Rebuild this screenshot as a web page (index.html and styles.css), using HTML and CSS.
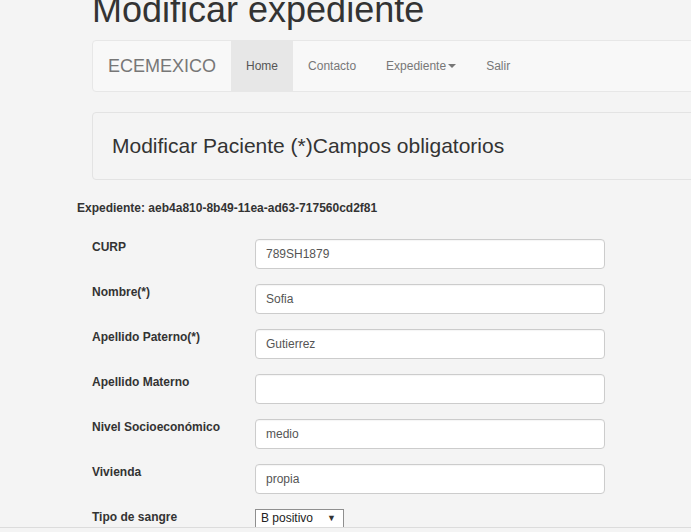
FILE: index.html
```html
<!DOCTYPE html>
<html lang="es">
<head>
    <meta charset="UTF-8">
    <meta name="viewport" content="width=device-width, initial-scale=1.0">
    <title>Modificar expediente</title>
    <link rel="stylesheet" href="styles.css">
</head>
<body>
    <div class="container">
        <h1>Modificar expediente</h1>
        <nav class="navbar">
            <a href="#" class="navbar-brand">ECEMEXICO</a>
            <ul class="nav">
                <li class="active"><a href="#">Home</a></li>
                <li><a href="#">Contacto</a></li>
                <li><a href="#">Expediente<span class="caret"></span></a></li>
                <li><a href="#">Salir</a></li>
            </ul>
        </nav>
        <div class="well">Modificar Paciente (*)Campos obligatorios</div>
    </div>

    <form class="record">
        <p class="record-id">Expediente: aeb4a810-8b49-11ea-ad63-717560cd2f81</p>
        <div class="form-row">
            <label for="curp">CURP</label>
            <input type="text" id="curp" value="789SH1879">
        </div>
        <div class="form-row">
            <label for="nombre">Nombre(*)</label>
            <input type="text" id="nombre" value="Sofia">
        </div>
        <div class="form-row">
            <label for="paterno">Apellido Paterno(*)</label>
            <input type="text" id="paterno" value="Gutierrez">
        </div>
        <div class="form-row">
            <label for="materno">Apellido Materno</label>
            <input type="text" id="materno" value="">
        </div>
        <div class="form-row">
            <label for="nivel">Nivel Socioeconómico</label>
            <input type="text" id="nivel" value="medio">
        </div>
        <div class="form-row">
            <label for="vivienda">Vivienda</label>
            <input type="text" id="vivienda" value="propia">
        </div>
        <div class="form-row">
            <label for="sangre">Tipo de sangre</label>
            <span class="select-wrap">
                <select id="sangre">
                    <option>B positivo</option>
                    <option>A positivo</option>
                    <option>O positivo</option>
                </select>
            </span>
        </div>
    </form>
    <div class="edge-line"></div>
</body>
</html>
```

FILE: styles.css
```css
html, body {
    overflow: hidden;
}
body {
    font-family: 'Liberation Sans', Arial, sans-serif;
    font-size: 12px;
    line-height: 1.42857;
    color: #333;
    background-color: #f4f4f4;
    margin: 0;
    padding: 0;
}
.container {
    margin-left: 92px;
    width: 640px;
}
h1 {
    font-size: 36px;
    font-weight: normal;
    line-height: 1.1;
    margin: -10px 0 10px;
    color: #333;
}
.navbar {
    display: flex;
    height: 50px;
    background-color: #f8f8f8;
    border: 1px solid #e7e7e7;
    border-radius: 4px;
    margin-bottom: 20px;
}
.navbar-brand {
    padding: 15px;
    font-size: 18px;
    line-height: 20px;
    color: #777;
    text-decoration: none;
}
.nav {
    display: flex;
    list-style-type: none;
    margin: 0;
    padding: 0;
}
.nav a {
    display: block;
    padding: 15px;
    line-height: 20px;
    color: #777;
    text-decoration: none;
}
.nav .active a {
    background-color: #e7e7e7;
    color: #555;
}
.caret {
    display: inline-block;
    width: 0;
    height: 0;
    margin-left: 2px;
    vertical-align: middle;
    border-top: 4px solid #777;
    border-left: 4px solid transparent;
    border-right: 4px solid transparent;
}
.well {
    background-color: #f4f4f4;
    border: 1px solid #e3e3e3;
    border-radius: 4px;
    padding: 19px;
    font-size: 21px;
    line-height: 28px;
    color: #333;
    margin-bottom: 20px;
}
.record {
    padding-left: 77px;
}
.record-id {
    font-weight: bold;
    margin: 0 0 22px;
}
.form-row {
    display: flex;
    align-items: flex-start;
    margin-left: 15px;
    margin-bottom: 15px;
}
.form-row label {
    width: 163px;
    flex-shrink: 0;
    font-weight: bold;
}
.form-row input {
    width: 350px;
    height: 30px;
    box-sizing: border-box;
    padding: 6px 10px;
    border: 1px solid #ccc;
    border-radius: 4px;
    background-color: #fff;
    font-family: inherit;
    font-size: 12px;
    color: #555;
    box-shadow: inset 0 1px 1px rgba(0, 0, 0, 0.04);
}
.select-wrap {
    position: relative;
    display: inline-block;
}
.select-wrap select {
    -webkit-appearance: none;
    appearance: none;
    width: 89px;
    height: 19px;
    padding: 0 0 0 5px;
    border: 1px solid #8f8f8f;
    border-radius: 0;
    background-color: #fff;
    font-family: inherit;
    font-size: 12px;
    color: #222;
}
.select-wrap::after {
    content: "▼";
    position: absolute;
    right: 8px;
    top: 4px;
    font-size: 9px;
    line-height: 10px;
    color: #333;
    pointer-events: none;
}
.edge-line {
    position: fixed;
    left: 0;
    right: 0;
    bottom: 4px;
    height: 1px;
    background-color: #dcdcdc;
}
```
